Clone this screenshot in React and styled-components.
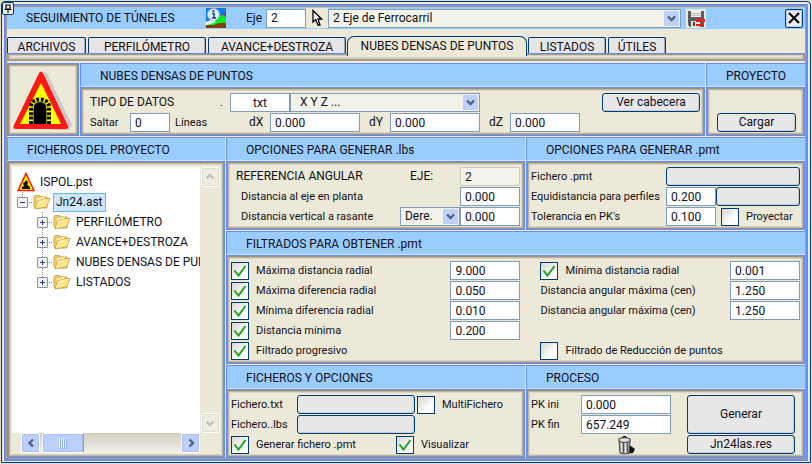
import React from "react";
import styled, { createGlobalStyle, css } from "styled-components";

const blue = "#668cf5";
const navy = "#003c74";
const face = "#ece9d8";
const fieldEdge = "#7f9db9";

const Global = createGlobalStyle`
  * { box-sizing: border-box; }
  body { margin: 0; background: #e4dfcc; }
  body, button, input, select {
    font-family: Roboto, "Liberation Sans", sans-serif;
    font-size: 12px;
    line-height: 15px;
    color: #101018;
  }
`;

const Window = styled.main`
  position: relative;
  margin: 1px 1px 0;
  padding: 2px 2px 1px;
  border: 1px solid ${navy};
  border-radius: 4px 4px 0 0;
  background: ${face};
`;
const Frame = styled.div`
  border: 2px solid ${blue};
  border-top-color: #6f88d8;
  box-shadow: inset 0 0 0 1px #a79f90;
  padding: 1px;
  background: ${face};
`;
const Pin = styled.button`
  position: absolute;
  left: 0;
  top: 0;
  width: 12px;
  height: 13px;
  padding: 0;
  border: 1px solid ${navy};
  border-radius: 2px;
  background: #f4f1e4;
  display: grid;
  place-items: center;
`;

const TitleBar = styled.header`
  display: flex;
  align-items: center;
  height: 22px;
  padding: 0 2px 0 19px;
  background: #99ccff;
`;
const Title = styled.h1`
  flex: 0 0 180px;
  margin: 0;
  font-size: inherit;
  font-weight: normal;
`;
const IconButton = styled.button`
  display: grid;
  place-items: center;
  flex: none;
  padding: 0;
  border: 0;
  width: ${(p) => p.$w || 20}px;
  height: 20px;
  background: ${(p) => p.$bg || "transparent"};
`;
const EjeLabel = styled.label`
  flex: 0 0 40px;
  padding-left: 20px;
`;
const CloseButton = styled(IconButton)`
  margin-left: auto;
  width: 18px;
  height: 19px;
  border: 1px solid ${navy};
  border-radius: 2px;
  background: #e9eaf0;
  box-shadow: inset 0 0 0 1px #b9cdf2;
`;

const Tabs = styled.nav`
  display: flex;
  align-items: flex-end;
  gap: 2px;
  height: 24px;
`;
const Tab = styled.button`
  flex: 0 1 ${(p) => p.$w}px;
  height: 16px;
  padding: 2px 0 0;
  white-space: nowrap;
  border: 1px solid ${navy};
  border-bottom: 0;
  border-radius: 2px 2px 0 0;
  background: #e7e6e6;
  box-shadow: inset -1px 0 0 #9aa9bd;
  ${(p) =>
    p.$active &&
    css`
      position: relative;
      height: 20px;
      margin: 0 -1px -3px;
      padding-bottom: 2px;
      border-radius: 7px 7px 0 0;
      background: ${face};
      box-shadow: none;
    `}
`;
const Groove = styled.div`
  height: 8px;
  border: 2px solid #a39a8b;
  border-top: 1px solid ${blue};
  background: ${face};
  box-shadow: inset 0 1px 0 #a39a8b, inset 0 0 0 2px #d4cfc2;
`;

const Sections = styled.div`
  display: flex;
  flex-direction: column;
  gap: 1px;
  margin-top: 2px;
`;
const TopRow = styled.div`
  display: grid;
  grid-template-columns: 72px minmax(0, 1fr) 99px;
  gap: 1px;
`;
const MainRow = styled.div`
  display: grid;
  grid-template-columns: 218px minmax(0, 1fr);
  gap: 1px;
`;
const Stack = styled.div`
  display: flex;
  flex-direction: column;
  gap: 1px;
`;
const Split = styled.div`
  display: grid;
  grid-template-columns: minmax(0, 300fr) minmax(0, 280fr);
  gap: 1px;
`;
const Panel = styled.section`
  display: flex;
  flex-direction: column;
  min-width: 0;
`;
const Heading = styled.h2`
  margin: 0;
  height: 24px;
  padding: 5px 0 0 19px;
  font-size: inherit;
  font-weight: normal;
  white-space: nowrap;
  background: #99ccff;
  border: 1px solid ${blue};
  border-right: 0;
  border-bottom-color: #d6e4f5;
`;
const Body = styled.div`
  flex: 1;
  display: flex;
  flex-direction: column;
  gap: 1px;
  min-width: 0;
  padding: ${(p) => p.$pad || "5px 4px 3px"};
  border: 1px solid ${blue};
  background: ${face};
  box-shadow: inset 0 0 0 1px #9b917f, inset 0 0 0 2px #bcb5a6, inset 0 0 0 3px #dad5c5;
`;
const Row = styled.div`
  display: flex;
  align-items: center;
  height: 19px;
  white-space: nowrap;
  padding-left: ${(p) => p.$indent || 0}px;
`;
const labelText = css`
  font-size: ${(p) => (p.$caps ? 12 : 11)}px;
  white-space: nowrap;
`;
const Text = styled.label`
  flex: ${(p) => (p.$w ? `0 0 ${p.$w}px` : "1 1 0")};
  padding-left: ${(p) => p.$pl || 0}px;
  ${labelText}
`;
const Field = styled.input`
  flex: none;
  width: ${(p) => p.$w}px;
  height: 19px;
  padding: 0 4px;
  border: 1px solid ${fieldEdge};
  border-radius: 0;
  background: #fff;
  text-align: ${(p) => p.$align || "left"};
  &:read-only {
    border-color: #cdcab9;
    border-radius: 2px;
    background: #f4f3ea;
  }
`;
const Button = styled.button`
  flex: ${(p) => (p.$w ? `0 0 ${p.$w}px` : "none")};
  height: 19px;
  padding: 0;
  border: 1px solid ${navy};
  border-radius: 3px;
  background: #e8e7e7;
  box-shadow: inset -1px -1px 0 #c9ced8;
`;
const EndButton = styled(Button)`
  margin-left: auto;
`;
const SelectBox = styled.span`
  display: grid;
  flex: ${(p) => (p.$w ? `0 0 ${p.$w}px` : "1 1 0")};
  max-width: ${(p) => p.$max || 400}px;
  height: 19px;
  align-items: center;
  > * { grid-area: 1 / 1; }
  > svg { justify-self: end; margin-right: 2px; pointer-events: none; }
`;
const Select = styled.select`
  appearance: none;
  width: 100%;
  height: 19px;
  padding: 0 18px 0 ${(p) => p.$pl || 4}px;
  border: 1px solid ${fieldEdge};
  border-radius: 0;
  background: #f3f2e9;
`;
const CheckLabel = styled.label`
  display: flex;
  align-items: center;
  gap: 7px;
  flex: ${(p) => (p.$w ? `0 0 ${p.$w}px` : "1 1 0")};
  margin-left: ${(p) => p.$ml || 0}px;
  ${labelText}
`;
const Tick = styled.span`
  display: grid;
  > * { grid-area: 1 / 1; }
  > svg { visibility: hidden; pointer-events: none; }
  > input:checked + svg { visibility: visible; }
`;
const Box = styled.input`
  appearance: none;
  margin: 0;
  width: 18px;
  height: 18px;
  border: 1px solid ${navy};
  background: linear-gradient(135deg, #d9d9d4 0%, #e6e6e2 30%, #fbfbfa 60%, #fff 100%);
`;

function Check({ children, checked, ...rest }) {
  return (
    <CheckLabel {...rest}>
      <Tick>
        <Box type="checkbox" defaultChecked={checked} />
        <svg width="18" height="18" viewBox="0 0 18 18" fill="none" stroke="#21a121" strokeWidth="2">
          <path d="M3.500 8.500 7.500 13.500 14.500 4" />
        </svg>
      </Tick>
      {children}
    </CheckLabel>
  );
}

function Choice({ label, value, w, max, pl }) {
  return (
    <SelectBox $w={w} $max={max}>
      <Select aria-label={label} $pl={pl} defaultValue={value}>
        <option>{value}</option>
      </Select>
      <svg width="15" height="15" viewBox="0 0 15 15">
        <rect width="15" height="15" rx="1" fill="#bfd0fa" />
        <path d="M4 5.500 7.500 9 11 5.500" fill="none" stroke="#4d6185" strokeWidth="2.400" />
      </svg>
    </SelectBox>
  );
}

/* Project tree */
const TreeBody = styled(Body)`
  display: grid;
  grid-template-columns: minmax(0, 1fr) 20px;
  grid-template-rows: minmax(0, 1fr) 20px;
  gap: 0;
`;
const TreeList = styled.ul`
  margin: 0;
  padding: ${(p) => (p.$root ? "5px 0 0 5px" : "0 0 0 20px")};
  list-style: none;
  overflow: hidden;
  background: #fff;
`;
const TreeItem = styled.li`
  display: flex;
  align-items: center;
  height: 20px;
  white-space: nowrap;
  ${(p) =>
    p.$branch &&
    css`
      background:
        repeating-linear-gradient(#8a8a8a 0 1px, transparent 1px 2px) 5px 0 / 1px ${p.$last ? "10px" : "20px"} no-repeat,
        repeating-linear-gradient(90deg, #8a8a8a 0 1px, transparent 1px 2px) 6px 10px / 10px 1px no-repeat;
    `}
`;
const Expander = styled.button`
  display: grid;
  place-items: center;
  flex: none;
  width: 11px;
  height: 11px;
  margin-right: 5px;
  padding: 0;
  border: 1px solid #8394ad;
  border-radius: 1px;
  background: #f3f1ea;
`;
const NodeName = styled.button`
  margin-left: 2px;
  padding: 1px 2px;
  height: 19px;
  border: 1px solid ${(p) => (p.$on ? "#66b5ec" : "transparent")};
  background: ${(p) => (p.$on ? "#cde7ff" : "transparent")};
`;
const VBar = styled.div`
  display: flex;
  flex-direction: column;
  justify-content: space-between;
  align-items: center;
  background: #ebe8d9;
`;
const HBar = styled.div`
  display: flex;
  margin-left: 9px;
  background: linear-gradient(#d3cdbf, #f1f0ea);
`;
const Corner = styled.div`
  background: ${face};
`;
const Arrow = styled.button`
  display: grid;
  place-items: center;
  width: 19px;
  height: 20px;
  padding: 0;
  border: 1px solid #fff;
  border-radius: 2px;
  color: ${(p) => (p.$dim ? "#c6c3b2" : "#4d6185")};
  background: ${(p) => (p.$dim ? "#eeede5" : "#bdd0fb")};
  box-shadow: inset 0 0 0 1px ${(p) => (p.$dim ? "#e0ddcf" : "#a9c0f2")};
`;
const Thumb = styled.div`
  display: grid;
  place-items: center;
  width: 42px;
  margin: 0 auto 0 2px;
  border: 1px solid #fff;
  border-right-color: #7f9fd8;
  border-radius: 2px;
  background: #bdd0fb;
  box-shadow: inset 0 0 0 1px #a9c0f2;
`;

const chevrons = {
  up: "M2.500 7.500 6 4 9.500 7.500",
  down: "M2.500 4.500 6 8 9.500 4.500",
  left: "M8 2.500 4.500 6 8 9.500",
  right: "M4.500 2.500 8 6 4.500 9.500",
};
function ScrollArrow({ dir, label, dim }) {
  return (
    <Arrow aria-label={label} $dim={dim}>
      <svg width="12" height="12" viewBox="0 0 12 12" fill="none" stroke="currentColor" strokeWidth="2.400">
        <path d={chevrons[dir]} />
      </svg>
    </Arrow>
  );
}

const FolderSvg = styled.svg`
  flex: none;
`;
function Folder() {
  return (
    <FolderSvg width="18" height="16" viewBox="0 0 18 16">
      <path d="M1 3 2 1.500H6.500L8 3H14V14H2L1 13Z" fill="#f0cf68" stroke="#c39a37" strokeWidth=".8" />
      <path d="M3 4 12.500 2.500 14 12 4 14Z" fill="#fff4bb" stroke="#d1ac4c" strokeWidth=".6" />
      <path d="M2 15 5 6.500 10 5.500 11 4.500H17L13.500 13Z" fill="#fbe58d" stroke="#c69d38" strokeWidth=".8" />
      <path d="M3.500 13.500 6 7.500 11 6.500" fill="none" stroke="#fffbd8" />
    </FolderSvg>
  );
}

function TunnelSign() {
  return (
    <svg width="60" height="60" viewBox="0 0 60 60">
      <path d="M31 1 34 2 59 54 56 59 40 59Z" fill="#c9c9c9" />
      <path d="M26 2Q28-1 30 2L55 55Q56 58 53 58H3Q-1 58 1 54Z" fill="#fb1a12" />
      <path d="M28 12 48 53H7Z" fill="#ffff00" />
      <path d="M18 53V37Q18 28.500 27 28.500 36 28.500 36 37V53" fill="none" stroke="#111" strokeWidth="4" strokeDasharray="3 1.400" />
      <path d="M20.500 53V38Q20.500 31 27 31 33.500 31 33.500 38V53Z" fill="#000" />
    </svg>
  );
}
const SmallSign = () => (
  <svg width="18" height="20" viewBox="0 0 18 20">
    <path d="M9 1.500 17 18.500H1Z" fill="#ffee00" stroke="#f0201a" strokeWidth="1.600" />
    <path d="M5 17V15L7 14 6 11 8 10 9 8 11 10 10.500 13 13 15V17Z" fill="#111" />
  </svg>
);

const SignBox = styled(Body)`
  padding: 2px 0 0;
  align-items: center;
  justify-content: center;
`;

const Filters = styled.div`
  display: grid;
  grid-template-columns: minmax(0, 290fr) minmax(0, 260fr);
  column-gap: 20px;
`;
const FilterCol = styled.div`
  display: grid;
  grid-auto-rows: 19px;
  gap: 1px;
`;
const Process = styled.div`
  display: grid;
  grid-template-columns: 50px 90px 108px;
  grid-template-rows: repeat(3, 19px);
  gap: 1px 0;
  align-items: center;
  grid-template-columns: 50px 90px minmax(0, 1fr);
`;
const RunButton = styled(Button)`
  grid-area: 1 / 3 / 3 / 4;
  height: 39px;
  margin: 0 5px 0 16px;
`;
const ResultButton = styled(Button)`
  grid-area: 3 / 3;
  margin: 0 5px 0 16px;
`;
const TrashCell = styled.span`
  grid-area: 3 / 2;
  justify-self: center;
  height: 20px;
`;

function FilterRow({ id, text, value, check, checked }) {
  return (
    <Row>
      {check ? <Check checked={checked}>{text}</Check> : <Text htmlFor={id}>{text}</Text>}
      {value && <Field id={id} $w={70} aria-label={text} defaultValue={value} />}
    </Row>
  );
}

const tabs = [
  ["ARCHIVOS", 79],
  ["PERFILÓMETRO", 118],
  ["AVANCE+DESTROZA", 138],
  ["NUBES DENSAS DE PUNTOS", 180],
  ["LISTADOS", 78],
  ["ÚTILES", 58],
];
const folders = ["PERFILÓMETRO", "AVANCE+DESTROZA", "NUBES DENSAS DE PUNTOS", "LISTADOS"];

export default function App() {
  return (
    <>
      <Global />
      <Window>
        <Frame>
          <TitleBar>
            <Title>SEGUIMIENTO DE TÚNELES</Title>
            <IconButton aria-label="Información">
              <svg width="20" height="20" viewBox="0 0 20 20">
                <rect width="20" height="20" fill="#087ff0" />
                <path d="M0 16 9 12 13 8 20 5V17H0Z" fill="#00ee22" />
                <path d="M14 8 20 4V9L18 7Z" fill="#8a2090" />
                <path d="M0 17H8L13 15H20V20H0Z" fill="#844000" />
                <path d="M0 14 5 12 10 13 5 16 0 17Z" fill="#fff" />
                <circle cx="7.500" cy="6.500" r="6" fill="#e2ecf6" stroke="#9bb4cc" />
                <path d="M6 12 7.500 16 9.500 12Z" fill="#dce8f2" />
                <path d="M6 5.500H8V10M6 10H10" fill="none" stroke="#123c9c" strokeWidth="1.500" />
                <circle cx="7.500" cy="3" r="1.100" fill="#123c9c" />
              </svg>
            </IconButton>
            <EjeLabel htmlFor="eje">Eje</EjeLabel>
            <Field id="eje" $w={40} defaultValue="2" />
            <IconButton $w={22} $bg={face} aria-label="Seleccionar eje">
              <svg width="12" height="18" viewBox="0 0 12 18">
                <path d="M2 1.500V13L4.700 10.500 7 16H9L7 10H10.500Z" fill="#fff" stroke="#000" strokeWidth="1.300" />
              </svg>
            </IconButton>
            <Choice label="Nombre del eje" value="2 Eje de Ferrocarril" max={353} />
            <IconButton $w={30} aria-label="Guardar">
              <svg width="20" height="19" viewBox="0 0 20 19">
                <rect width="20" height="19" fill={face} />
                <path d="M2 2H18V18H4L2 16Z" fill="#5d5d5d" />
                <path d="M5 2H15V8H5Z" fill="#f5f5f5" />
                <path d="M5 4.500H15M5 6.500H15" stroke="#bbb" />
                <path d="M5 12H14V18H5Z" fill="#ddd" />
                <path d="M7 13H9V17H7Z" fill="#444" />
                <path d="M10 10H19V13H10ZM10 15H18V17H10Z" fill="#f31515" />
              </svg>
            </IconButton>
            <CloseButton aria-label="Cerrar">
              <svg width="12" height="12" viewBox="0 0 12 12" stroke="#000" strokeWidth="2">
                <path d="M1 1 11 11M11 1 1 11" />
              </svg>
            </CloseButton>
          </TitleBar>

          <Tabs>
            {tabs.map(([name, w]) => (
              <Tab key={name} $w={w} $active={name === "NUBES DENSAS DE PUNTOS"}>
                {name}
              </Tab>
            ))}
          </Tabs>
          <Groove />

          <Sections>
            <TopRow>
              <SignBox>
                <TunnelSign />
              </SignBox>
              <Panel>
                <Heading>NUBES DENSAS DE PUNTOS</Heading>
                <Body $pad="5px 4px 3px 9px">
                  <Row>
                    <Text $caps $w={130} htmlFor="tipo">TIPO DE DATOS</Text>
                    <Text $w={10}>.</Text>
                    <Field id="tipo" $w={60} $align="center" defaultValue="txt" />
                    <Choice label="Formato" value="X Y Z ..." w={190} pl={9} />
                    <EndButton $w={98}>Ver cabecera</EndButton>
                  </Row>
                  <Row>
                    <Text $w={40} htmlFor="saltar">Saltar</Text>
                    <Field id="saltar" $w={40} defaultValue="0" />
                    <Text $w={79} $pl={5}>Líneas</Text>
                    <Text $caps $w={21} htmlFor="dx">dX</Text>
                    <Field id="dx" $w={90} defaultValue="0.000" />
                    <Text $caps $w={30} $pl={9} htmlFor="dy">dY</Text>
                    <Field id="dy" $w={90} defaultValue="0.000" />
                    <Text $caps $w={30} $pl={9} htmlFor="dz">dZ</Text>
                    <Field id="dz" $w={70} defaultValue="0.000" />
                  </Row>
                </Body>
              </Panel>
              <Panel>
                <Heading>PROYECTO</Heading>
                <Body $pad="25px 8px 3px 10px">
                  <Button>Cargar</Button>
                </Body>
              </Panel>
            </TopRow>

            <MainRow>
              <Panel>
                <Heading>FICHEROS DEL PROYECTO</Heading>
                <TreeBody $pad="5px 4px 4px">
                  <TreeList $root>
                    <TreeItem>
                      <SmallSign />
                      <NodeName>ISPOL.pst</NodeName>
                    </TreeItem>
                    <TreeItem $branch $last>
                      <Expander aria-label="Contraer">
                        <svg width="7" height="7" viewBox="0 0 7 7"><path d="M1 3.500H6" stroke="#26418c" /></svg>
                      </Expander>
                      <Folder />
                      <NodeName $on>Jn24.ast</NodeName>
                    </TreeItem>
                    <li>
                      <TreeList>
                        {folders.map((n, i) => (
                          <TreeItem key={n} $branch $last={i === folders.length - 1}>
                            <Expander aria-label="Expandir">
                              <svg width="7" height="7" viewBox="0 0 7 7"><path d="M1 3.500H6M3.500 1V6" stroke="#26418c" /></svg>
                            </Expander>
                            <Folder />
                            <NodeName>{n}</NodeName>
                          </TreeItem>
                        ))}
                      </TreeList>
                    </li>
                  </TreeList>
                  <VBar>
                    <ScrollArrow dir="up" dim label="Subir" />
                    <ScrollArrow dir="down" dim label="Bajar" />
                  </VBar>
                  <HBar>
                    <ScrollArrow dir="left" label="Izquierda" />
                    <Thumb>
                      <svg width="8" height="11" viewBox="0 0 8 11">
                        <path d="M.5 0V10M2.500 0V10M4.500 0V10M6.500 0V10" stroke="#f2f6ff" />
                        <path d="M1.500 1V11M3.500 1V11M5.500 1V11M7.500 1V11" stroke="#8cb0f8" />
                      </svg>
                    </Thumb>
                    <ScrollArrow dir="right" label="Derecha" />
                  </HBar>
                  <Corner />
                </TreeBody>
              </Panel>

              <Stack>
                <Split>
                  <Panel>
                    <Heading>OPCIONES PARA GENERAR .lbs</Heading>
                    <Body>
                      <Row $indent={5}>
                        <Text $caps>REFERENCIA ANGULAR</Text>
                        <Text $caps $w={50} htmlFor="ref">EJE:</Text>
                        <Field id="ref" $w={60} readOnly value="2" />
                      </Row>
                      <Row $indent={10}>
                        <Text htmlFor="dist">Distancia al eje en planta</Text>
                        <Field id="dist" $w={60} defaultValue="0.000" />
                      </Row>
                      <Row $indent={10}>
                        <Text htmlFor="vert">Distancia vertical a rasante</Text>
                        <Choice label="Lado" value="Dere." w={60} />
                        <Field id="vert" $w={60} defaultValue="0.000" />
                      </Row>
                    </Body>
                  </Panel>
                  <Panel>
                    <Heading>OPCIONES PARA GENERAR .pmt</Heading>
                    <Body>
                      <Row>
                        <Text>Fichero .pmt</Text>
                        <Button $w={134} aria-label="Fichero .pmt" />
                      </Row>
                      <Row>
                        <Text htmlFor="equi">Equidistancia para perfiles</Text>
                        <Field id="equi" $w={50} defaultValue="0.200" />
                        <Button $w={84} aria-label="Equidistancia" />
                      </Row>
                      <Row>
                        <Text htmlFor="tol">Tolerancia en PK's</Text>
                        <Field id="tol" $w={50} defaultValue="0.100" />
                        <Check $w={79} $ml={5}>Proyectar</Check>
                      </Row>
                    </Body>
                  </Panel>
                </Split>

                <Panel>
                  <Heading>FILTRADOS PARA OBTENER .pmt</Heading>
                  <Body>
                    <Filters>
                      <FilterCol>
                        <FilterRow check checked text="Máxima distancia radial" value="9.000" />
                        <FilterRow check checked text="Máxima diferencia radial" value="0.050" />
                        <FilterRow check checked text="Mínima diferencia radial" value="0.010" />
                        <FilterRow check checked text="Distancia mínima" value="0.200" />
                        <FilterRow check checked text="Filtrado progresivo" />
                      </FilterCol>
                      <FilterCol>
                        <FilterRow check checked text="Mínima distancia radial" value="0.001" />
                        <FilterRow id="ang1" text="Distancia angular máxima (cen)" value="1.250" />
                        <FilterRow id="ang2" text="Distancia angular máxima (cen)" value="1.250" />
                        <Row />
                        <FilterRow check text="Filtrado de Reducción de puntos" />
                      </FilterCol>
                    </Filters>
                  </Body>
                </Panel>

                <Split>
                  <Panel>
                    <Heading>FICHEROS Y OPCIONES</Heading>
                    <Body>
                      <Row>
                        <Text $w={66}>Fichero.txt</Text>
                        <Button $w={118} aria-label="Fichero txt" />
                        <Check $ml={2}>MultiFichero</Check>
                      </Row>
                      <Row>
                        <Text $w={66}>Fichero..lbs</Text>
                        <Button $w={118} aria-label="Fichero lbs" />
                      </Row>
                      <Row>
                        <Check $w={165} checked>Generar fichero .pmt</Check>
                        <Check checked>Visualizar</Check>
                      </Row>
                    </Body>
                  </Panel>
                  <Panel>
                    <Heading>PROCESO</Heading>
                    <Body>
                      <Process>
                        <Text htmlFor="ini">PK ini</Text>
                        <Field id="ini" $w={90} defaultValue="0.000" />
                        <Text htmlFor="fin">PK fin</Text>
                        <Field id="fin" $w={90} defaultValue="657.249" />
                        <TrashCell>
                          <svg width="20" height="20" viewBox="0 0 20 20">
                            <path d="M12 9 19 14 17 18 9 19Z" fill="#111" />
                            <path d="M3 6H14L13 18Q8 20 4 18Z" fill="#a9a9a9" stroke="#444" />
                            <path d="M5.500 8V17M9.500 8V18" stroke="#eee" />
                            <path d="M7.500 8V18M11.500 8V17" stroke="#555" />
                            <ellipse cx="8.500" cy="5" rx="6" ry="2.500" fill="#d8d8d8" stroke="#333" />
                            <path d="M6.500 3Q8.500 0 10.500 3" fill="none" stroke="#222" strokeWidth="1.300" />
                          </svg>
                        </TrashCell>
                        <RunButton>Generar</RunButton>
                        <ResultButton>Jn24las.res</ResultButton>
                      </Process>
                    </Body>
                  </Panel>
                </Split>
              </Stack>
            </MainRow>
          </Sections>
        </Frame>
        <Pin aria-label="Fijar">
          <svg width="8" height="9" viewBox="0 0 8 9" fill="none" stroke="#000" strokeWidth="1.200">
            <path d="M2 1H6V5H2ZM0.500 5.500H7.500M4 5V9" />
          </svg>
        </Pin>
      </Window>
    </>
  );
}
